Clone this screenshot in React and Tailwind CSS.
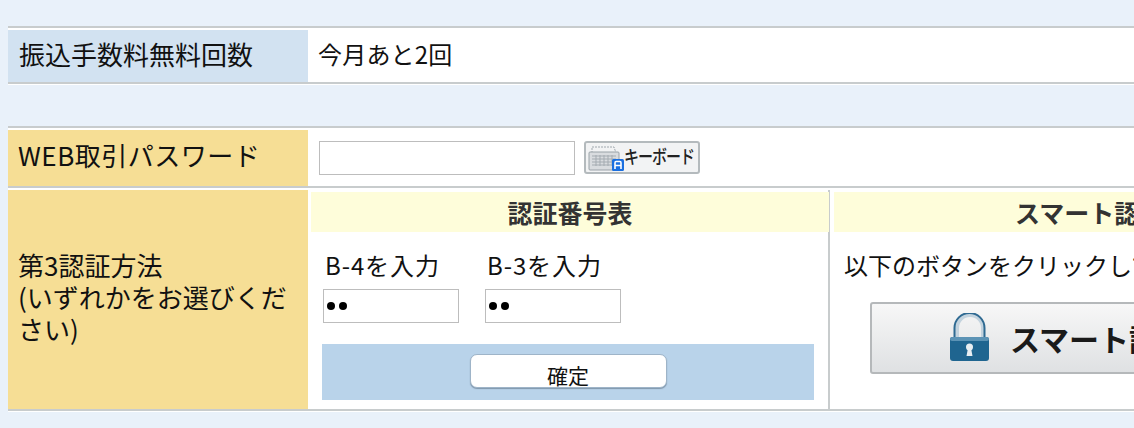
const font = { fontFamily: '"Noto Sans CJK JP", "Noto Sans", sans-serif' };

const KeyboardIcon = () => (
  <svg width="36" height="28" viewBox="0 0 36 28" className="shrink-0">
    <path d="M4 9 L4 3 L26 3 L28 9" fill="none" stroke="#a0a8ae" strokeWidth="1" strokeDasharray="2 1" />
    <rect x="1" y="8" width="30" height="18" rx="1" fill="#d9dcdf" stroke="#9aa2a8" />
    <path d="M4 12h24M4 15h24M4 18h24M4 21h24M8 11v11M12 11v11M16 11v11M20 11v11M24 11v11" stroke="#a4abb1" strokeWidth="1" />
    <rect x="24" y="15" width="12" height="12" rx="1.5" fill="#1a6fe0" />
    <path d="M27 25v-6q0-1.500 1-1.500h4q1 0 1 1.500v6M27 21.500h6" fill="none" stroke="#fff" strokeWidth="1.600" />
  </svg>
);

const LockIcon = () => (
  <svg width="44" height="50" viewBox="0 0 44 50" className="shrink-0">
    <path d="M9 26 V15 a13 13 0 0 1 26 0 V26" fill="none" stroke="#c3d3de" strokeWidth="4" />
    <path d="M6.500 26 V15 a15 15 0 0 1 30 0 V26" fill="none" stroke="#2f6a92" strokeWidth="2" />
    <rect x="2" y="24" width="39" height="24" rx="3" fill="#1f6590" />
    <rect x="2" y="24" width="39" height="4" rx="2" fill="#5c93b5" />
    <circle cx="21.500" cy="34" r="3.500" fill="#e8eef2" />
    <path d="M20 35 L18.500 43 H24.500 L23 35 Z" fill="#e8eef2" />
  </svg>
);

const Field = ({ label }) => (
  <div className="w-[136px]">
    <div className="pl-[2px] text-[24px] leading-[28px] h-[28px] tracking-[0.9px] whitespace-nowrap">{label}</div>
    <div className="mt-[10px] h-[34px] border border-[#bdbdbd] bg-white pl-[3px] flex items-center gap-[4px]">
      <span className="w-[8px] h-[8px] rounded-full bg-black" />
      <span className="w-[8px] h-[8px] rounded-full bg-black" />
    </div>
  </div>
);

export default function App() {
  return (
    <div style={font} className="w-[1134px] h-[428px] overflow-hidden bg-[#e9f1fa] pt-[26px] pl-[8px] text-[#111]">
      <div className="w-[1300px]">
        {/* 振込手数料 */}
        <div className="border-t-2 border-b-2 border-[#c8cccd] bg-white h-[58px] py-[2px] flex">
          <div className="w-[300px] -mb-[2px] bg-[#d2e2f1] pl-[11px] text-[26px] leading-[48px] whitespace-nowrap">振込手数料無料回数</div>
          <div className="pl-[10px] text-[24px] leading-[48px] tracking-[0.2px] whitespace-nowrap">今月あと2回</div>
        </div>
        <div className="h-[1px] bg-white" />

        {/* パスワード */}
        <div className="mt-[41px] border-t-2 border-[#c8cccd] bg-white">
          <div className="h-[60px] pt-[2px] flex border-b-2 border-[#c8cccd]">
            <div className="w-[300px] bg-[#f6de95] pl-[10px] text-[26px] leading-[50px] tracking-[0.5px] whitespace-nowrap">WEB取引パスワード</div>
            <div className="pl-[11px] pt-[11px] flex items-start gap-[9px]">
              <div className="w-[256px] h-[34px] border border-[#bdbdbd] bg-white" />
              <div className="w-[116px] h-[33px] border-2 border-[#b4babd] rounded-[3px] bg-[#f2f3f4] flex items-center pl-[2px] overflow-hidden">
                <KeyboardIcon />
                <span className="inline-block scale-y-125 text-[15px] font-medium tracking-[-1px] text-[#222] whitespace-nowrap">キーボード</span>
              </div>
            </div>
          </div>

          {/* 第3認証方法 */}
          <div className="h-[223px] pt-[2px] flex border-b-2 border-[#c8cccd]">
            <div className="w-[300px] bg-[#f6de95] pl-[10px] pr-[8px] flex items-center text-[26px] leading-[32px] pb-[5px]">
              <div>第3認証方法<br />(いずれかをお選びください)</div>
            </div>
            <div className="w-[522px] pl-[3px] border-r-2 border-[#c8cccd]">
              <div className="mt-[2px] h-[40px] bg-[#fefdda] w-[518px] text-center text-[25px] font-bold leading-[40px] text-[#333]">認証番号表</div>
              <div className="pl-[12px] pt-[19px] flex gap-[26px]">
                <Field label="B-4を入力" />
                <Field label="B-3を入力" />
              </div>
              <div className="ml-[11px] mt-[21px] w-[492px] h-[56px] bg-[#b9d3ea] flex justify-center pt-[10px]">
                <div className="w-[197px] h-[34px] rounded-[7px] bg-white border border-[#9eb4c8] shadow-[0_1px_1px_rgba(70,90,110,0.5)] text-center text-[21px] leading-[40px]">確定</div>
              </div>
            </div>
            <div className="flex-1 pl-[4px]">
              <div className="mt-[2px] h-[40px] bg-[#fefdda] text-[25px] font-bold leading-[40px] text-[#333] pl-[181px] whitespace-nowrap">スマート認証</div>
              <div className="pl-[10px] pt-[19px] text-[24px] leading-[28px] whitespace-nowrap">以下のボタンをクリックして</div>
              <div className="ml-[36px] mt-[23px] w-[400px] h-[72px] border-2 border-[#b5b8ba] rounded-[3px] bg-gradient-to-b from-[#f7f7f7] to-[#dfe1e3] flex items-center pl-[76px] gap-[18px]">
                <LockIcon />
                <span className="text-[30px] font-bold text-[#1a1a1a] whitespace-nowrap">スマート認証</span>
              </div>
            </div>
          </div>
        </div>
        <div className="h-[1px] bg-white" />
      </div>
    </div>
  );
}
